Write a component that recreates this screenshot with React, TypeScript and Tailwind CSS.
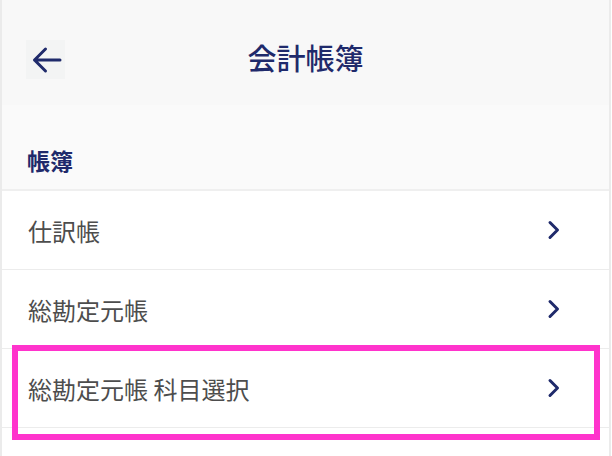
import React from "react";

const FONT = { fontFamily: '"Noto Sans CJK JP", "Noto Sans", sans-serif' };

function Chevron() {
  return (
    <svg width="14" height="20" viewBox="0 0 14 20" className="shrink-0">
      <polyline
        points="3,2.5 10.5,10 3,17.5"
        fill="none"
        stroke="#1f2a6b"
        strokeWidth="3"
        strokeLinecap="round"
        strokeLinejoin="round"
      />
    </svg>
  );
}

function Row({ label }: { label: string }) {
  return (
    <div className="h-[79px] border-b border-[#ececec] bg-white flex items-center pl-[26px] pr-[48px] justify-between">
      <span className="text-[24px] leading-none text-[#4d4d4d] mt-[2px]">{label}</span>
      <Chevron />
    </div>
  );
}

export default function App() {
  return (
    <div className="relative w-[612px] h-[456px] overflow-hidden bg-white" style={FONT}>
      <div className="w-[611px] h-full border-l-2 border-r-2 border-[#ebebeb] flex flex-col">
        <div className="h-[105px] bg-[#f8f8f8] relative flex items-center justify-center">
          <div className="absolute left-[24px] top-[40px] w-[39px] h-[39px] bg-[#f3f4f4] flex items-center justify-center">
            <svg width="32" height="28" viewBox="0 0 32 28">
              <path
                d="M4.5 14 H30 M15.5 3 L4.5 14 L15.5 25"
                fill="none"
                stroke="#1f2a6b"
                strokeWidth="3"
                strokeLinecap="round"
                strokeLinejoin="round"
              />
            </svg>
          </div>
          <span className="text-[29px] font-medium leading-none text-[#1f2a6b] mt-[10px]">会計帳簿</span>
        </div>
        <div className="h-[86px] bg-[#fafafa] border-b-2 border-[#efefef] flex items-end pl-[25px] pb-[14px]">
          <span className="text-[23px] font-bold leading-[30px] text-[#1f2a6b]">帳簿</span>
        </div>
        <Row label="仕訳帳" />
        <Row label="総勘定元帳" />
        <Row label="総勘定元帳 科目選択" />
        <div className="flex-1 bg-white" />
      </div>
      <div className="absolute left-[12px] top-[345px] w-[588px] h-[95px] border-[6px] border-[#ff33cc]" />
    </div>
  );
}
